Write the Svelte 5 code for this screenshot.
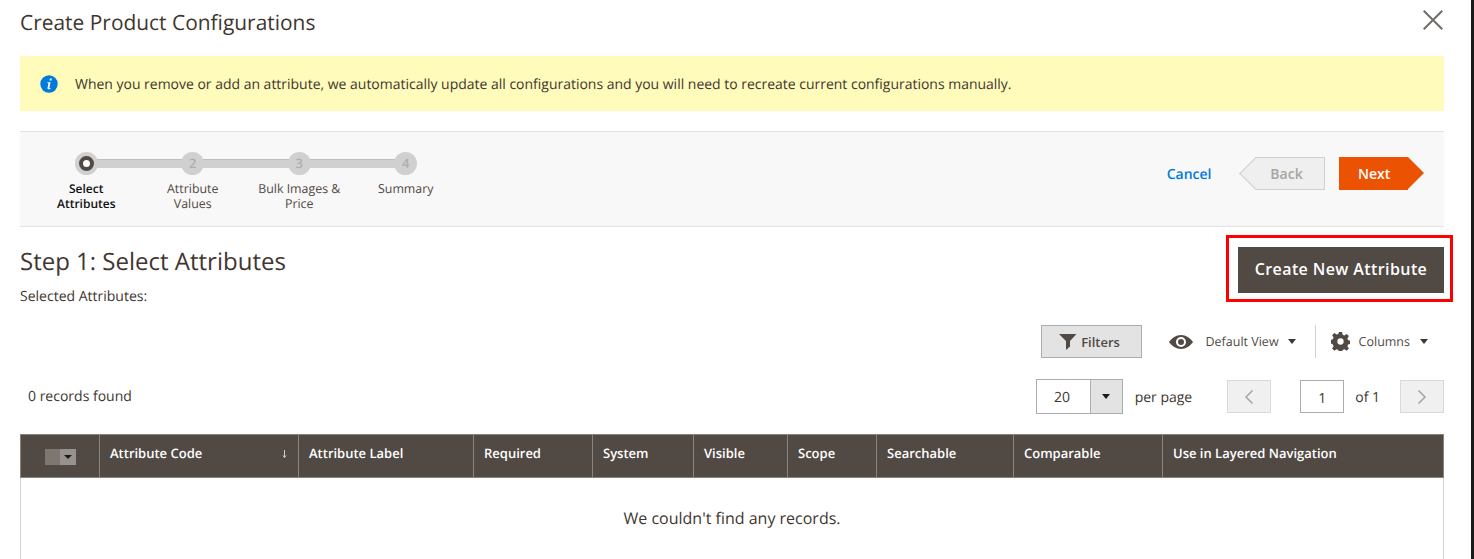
<script>
  const steps = [
    { label: 'Select Attributes', num: '', active: true },
    { label: 'Attribute Values', num: '2' },
    { label: 'Bulk Images & Price', num: '3' },
    { label: 'Summary', num: '4' }
  ];

  // column widths read off the header
  const columns = [
    { label: 'Attribute Code', width: 199, sort: true },
    { label: 'Attribute Label', width: 175 },
    { label: 'Required', width: 119 },
    { label: 'System', width: 101 },
    { label: 'Visible', width: 94 },
    { label: 'Scope', width: 89 },
    { label: 'Searchable', width: 137 },
    { label: 'Comparable', width: 149 },
    { label: 'Use in Layered Navigation', width: 281 }
  ];
</script>

<div class="page">
  <main class="modal">
    <header class="modal-head">
      <h1>Create Product Configurations</h1>
      <button class="close" aria-label="Close">
        <svg width="20" height="20" viewBox="0 0 20 20"><path d="M.7.7 19.300 19.300M19.300.7.7 19.300" fill="none" stroke="#736d68" stroke-width="2"/></svg>
      </button>
    </header>

    <div class="notice">
      <svg class="info" width="18" height="18" viewBox="0 0 18 18">
        <circle cx="9" cy="9" r="8.7" fill="#007bdb"/>
        <path d="M9.9 3.6h2l-.4 2h-2zM7.2 7.3h3.4l-1.3 5.6c-.1.4.3.5 1.2-.1l.2.6c-1.3 1-3.4 1.500-3.200-.3l.9-4.300c.1-.5-.3-.8-1-.9z" fill="#fff"/>
      </svg>
      <span>When you remove or add an attribute, we automatically update all configurations and you will need to recreate current configurations manually.</span>
    </div>

    <section class="wizard">
      <ol class="steps">
        {#each steps as step}
          <li class="step" class:active={step.active}>
            <span class="dot">{step.num}</span>
            <span class="step-label">{step.label}</span>
          </li>
        {/each}
      </ol>
      <div class="wizard-actions">
        <a class="cancel" href="#cancel">Cancel</a>
        <button class="back">Back</button>
        <button class="next">Next</button>
      </div>
    </section>

    <section class="step-head">
      <div>
        <h2>Step 1: Select Attributes</h2>
        <p>Selected Attributes:</p>
      </div>
      <div class="highlight">
        <button class="create">Create New Attribute</button>
      </div>
    </section>

    <div class="toolbar">
      <button class="filters">
        <svg width="18" height="16" viewBox="0 0 18 16"><path d="M0 0h17.500L11 7v5.500L7 16V7z" fill="#514943"/></svg>
        Filters
      </button>
      <div class="view">
        <svg width="24" height="14" viewBox="0 0 24 14">
          <path fill-rule="evenodd" d="M12 0c5 0 9 3 12 7-3 4-7 7-12 7S3 11 0 7c3-4 7-7 12-7zm0 2a5 5 0 1 0 0 10 5 5 0 0 0 0-10z" fill="#514943"/>
          <circle cx="12" cy="7" r="3" fill="#514943"/>
        </svg>
        <span>Default View</span><i class="caret"></i>
      </div>
      <div class="columns-btn">
        <svg width="19" height="19" viewBox="0 0 24 24"><path fill-rule="evenodd" d="M10 0h4l.7 3.400 2.200.9 2.900-1.900 2.800 2.800-1.900 2.900.9 2.200 3.400.7v4l-3.400.7-.9 2.200 1.900 2.900-2.800 2.800-2.900-1.900-2.200.9-.7 3.400h-4l-.7-3.400-2.200-.9-2.900 1.900-2.800-2.800 1.900-2.900-.9-2.200L-1 14v-4l3.400-.7.9-2.200-1.900-2.900 2.800-2.800 2.900 1.900 2.200-.9zM12 8a4 4 0 1 0 0 8 4 4 0 0 0 0-8z" fill="#514943"/></svg>
        <span>Columns</span><i class="caret"></i>
      </div>
    </div>

    <div class="pager-row">
      <span class="records">0 records found</span>
      <div class="pager">
        <div class="per-page">
          <span class="per-value">20</span>
          <span class="per-toggle"><i class="caret dark"></i></span>
        </div>
        <span class="per-label">per page</span>
        <button class="page-btn prev" aria-label="Previous">
          <svg width="10" height="16" viewBox="0 0 10 16"><path d="M8.500 1.500 2 8l6.500 6.500" fill="none" stroke="#a8a39f" stroke-width="1.500"/></svg>
        </button>
        <input class="page-input" value="1" />
        <span class="of">of 1</span>
        <button class="page-btn next-page" aria-label="Next">
          <svg width="10" height="16" viewBox="0 0 10 16"><path d="M1.500 1.500 8 8l-6.500 6.500" fill="none" stroke="#a8a39f" stroke-width="1.500"/></svg>
        </button>
      </div>
    </div>

    <table class="grid">
      <thead>
        <tr>
          <th class="check" style="width: 79px">
            <span class="multi"><span class="box"></span><span class="drop"><i class="caret dark small"></i></span></span>
          </th>
          {#each columns as col}
            <th style="width: {col.width}px">
              {col.label}
              {#if col.sort}
                <svg class="sort" width="5" height="8" viewBox="0 0 5 8"><path d="M2.500 0v7.500M1 5.500l1.500 2 1.500-2" fill="none" stroke="#cfcbc8" stroke-width="1"/></svg>
              {/if}
            </th>
          {/each}
        </tr>
      </thead>
      <tbody>
        <tr>
          <td colspan="10">We couldn't find any records.</td>
        </tr>
      </tbody>
    </table>
  </main>
  <div class="edge"></div>
</div>

<style>
  :global(body) {
    margin: 0;
    background: #fff;
    overflow: hidden;
  }

  .page {
    display: flex;
    justify-content: space-between;
    height: 559px;
    overflow: hidden;
    font-family: 'Open Sans', sans-serif;
    color: #41362f;
    font-size: 14px;
    text-rendering: geometricPrecision;
  }

  .edge {
    width: 3px;
    background: #1a1a1a;
  }

  .modal {
    width: 1424px;
    padding: 0 0 0 20px;
  }

  .modal-head {
    display: flex;
    justify-content: space-between;
    align-items: flex-start;
    height: 56px;
  }

  h1 {
    margin: 0;
    padding-top: 9px;
    font-size: 20.930px;
    line-height: 28px;
    font-weight: 400;
  }

  .close {
    border: 0;
    background: none;
    padding: 0;
    margin: 10px 1px 0 0;
    height: 20px;
  }

  .notice {
    display: flex;
    align-items: center;
    box-sizing: border-box;
    height: 55px;
    padding-left: 20px;
    gap: 17px;
    background: #fffbbb;
    font-size: 13.970px;
  }

  .notice span {
    padding-top: 2px;
  }

  .wizard {
    display: flex;
    justify-content: space-between;
    margin-top: 20px;
    height: 94px;
    background: #f8f8f8;
    border-top: 1px solid #e3e3e3;
    border-bottom: 1px solid #e3e3e3;
  }

  .steps {
    display: flex;
    list-style: none;
    margin: 0;
    padding: 20px 0 0 13px;
  }

  .step {
    position: relative;
    width: 106.500px;
    display: flex;
    flex-direction: column;
    align-items: center;
    font-size: 12.400px;
    line-height: 15px;
    text-align: center;
    color: #514943;
  }

  .step:not(:last-child)::after {
    content: '';
    position: absolute;
    top: 7px;
    left: 50%;
    width: 100%;
    height: 8px;
    background: #d0d0d0;
    border-top: 1px solid #bdbdbd;
  }

  .step.active {
    color: #111;
    font-size: 12px;
    font-weight: 600;
  }

  .dot {
    position: relative;
    z-index: 1;
    box-sizing: border-box;
    width: 23px;
    height: 23px;
    border-radius: 50%;
    background: #d0d0d0;
    color: #b0aeac;
    font-size: 13px;
    font-weight: 600;
    line-height: 23px;
    margin-bottom: 6px;
  }

  .active .dot::after {
    content: '';
    position: absolute;
    box-sizing: border-box;
    left: 4px;
    top: 4px;
    width: 15px;
    height: 15px;
    border-radius: 50%;
    background: #fff;
    border: 4px solid #514943;
  }

  .step-label {
    width: 86px;
  }

  .wizard-actions {
    display: flex;
    align-items: flex-start;
    padding: 25px 20px 0 0;
  }

  .cancel {
    color: #007bdb;
    font-weight: 600;
    font-size: 14px;
    text-decoration: none;
    line-height: 36px;
    margin-right: 27.500px;
  }

  .back,
  .next {
    position: relative;
    height: 33px;
    border: 0;
    font-family: inherit;
    font-size: 14px;
    font-weight: 600;
    padding: 0;
  }

  .back {
    width: 70px;
    margin-left: 16px;
    margin-right: 14px;
    background: #efefef;
    border: 1px solid #d0d0d0;
    border-left: 0;
    color: #a8a5a2;
    text-indent: -6px;
  }

  .back::before {
    content: '';
    position: absolute;
    left: -11px;
    top: 4px;
    width: 22px;
    height: 22px;
    background: #efefef;
    border-left: 1px solid #d0d0d0;
    border-bottom: 1px solid #d0d0d0;
    transform: rotate(45deg);
  }

  .next {
    width: 69px;
    margin-right: 16px;
    background: #eb5202;
    color: #fff;
    text-align: left;
    padding-left: 19px;
  }

  .next::after {
    content: '';
    position: absolute;
    right: -16px;
    top: 0;
    border-left: 16px solid #eb5202;
    border-top: 16.500px solid transparent;
    border-bottom: 16.500px solid transparent;
  }

  .step-head {
    display: flex;
    justify-content: space-between;
    align-items: flex-start;
    height: 98px;
  }

  h2 {
    margin: 18px 0 0;
    font-size: 24px;
    line-height: 33px;
    font-weight: 400;
  }

  .step-head p {
    margin: 9px 0 0;
    font-size: 14px;
    line-height: 19px;
  }

  .highlight {
    margin: 8px -9px 0 0;
    padding: 9px 6px 6px 9px;
    border: 3px solid #f00;
  }

  .create {
    display: block;
    width: 206px;
    height: 46px;
    border: 0;
    background: #514943;
    color: #fff;
    font-family: inherit;
    font-size: 16px;
    font-weight: 600;
    letter-spacing: 0.4px;
    padding: 0 0 2px;
  }

  .toolbar {
    display: flex;
    justify-content: flex-end;
    align-items: center;
    height: 33px;
    padding-right: 16px;
    font-size: 12.500px;
    color: #514943;
  }

  .filters {
    display: flex;
    align-items: center;
    justify-content: center;
    gap: 4px;
    width: 101px;
    height: 33px;
    margin-right: 27px;
    background: #e3e3e3;
    border: 1px solid #adadad;
    color: #514943;
    font-family: inherit;
    font-size: 13px;
    font-weight: 600;
    padding: 0 3px 0 0;
  }

  .view {
    display: flex;
    align-items: center;
    height: 33px;
    padding-right: 19px;
    border-right: 1px solid #d0d0d0;
  }

  .view svg {
    margin-right: 13px;
  }

  .columns-btn {
    display: flex;
    align-items: center;
    padding-left: 15px;
  }

  .columns-btn svg {
    margin-right: 9px;
  }

  .caret {
    display: inline-block;
    width: 0;
    height: 0;
    margin-left: 9px;
    border-top: 5px solid #41362f;
    border-left: 4.500px solid transparent;
    border-right: 4.500px solid transparent;
  }

  .columns-btn .caret {
    margin-left: 10px;
  }

  .caret.dark {
    margin: 0;
    border-top-color: #1a1a1a;
  }

  .caret.small {
    border-top-width: 4px;
    border-left-width: 4px;
    border-right-width: 4px;
  }

  .pager-row {
    display: flex;
    justify-content: space-between;
    align-items: center;
    height: 35px;
    margin-top: 21px;
  }

  .records {
    padding-left: 8px;
  }

  .pager {
    display: flex;
    align-items: center;
  }

  .per-page {
    display: flex;
    box-sizing: border-box;
    width: 87px;
    height: 35px;
    border: 1px solid #adadad;
  }

  .per-value {
    box-sizing: border-box;
    width: 53px;
    padding-right: 2px;
    text-align: center;
    line-height: 35px;
  }

  .per-toggle {
    flex: 1;
    display: flex;
    align-items: center;
    justify-content: center;
    background: #e3e3e3;
    border-left: 1px solid #adadad;
  }

  .per-label {
    margin: 0 35px 0 12px;
    padding-top: 2px;
  }

  .page-btn {
    display: flex;
    align-items: center;
    justify-content: center;
    box-sizing: border-box;
    width: 44px;
    height: 33px;
    background: #f0f0f0;
    border: 1px solid #d9d9d9;
    padding: 0;
  }

  .page-input {
    box-sizing: border-box;
    width: 44px;
    height: 33px;
    margin-left: 29px;
    border: 1px solid #adadad;
    text-align: center;
    font-family: inherit;
    font-size: 14px;
    color: #41362f;
    padding: 2px 0 0;
  }

  .of {
    margin: 0 20px 0 11px;
    padding-top: 2px;
  }

  .grid {
    margin-top: 20px;
    width: 1424px;
    table-layout: fixed;
    border-collapse: collapse;
    font-size: 13px;
  }

  .grid th {
    position: relative;
    box-sizing: border-box;
    height: 43px;
    padding: 0 10px 7px;
    background: #514943;
    color: #fff;
    font-weight: 600;
    text-align: left;
    border: 1px solid #8a837e;
  }

  .grid th.check {
    padding: 0;
    text-align: center;
  }

  .multi {
    display: inline-flex;
    vertical-align: middle;
    height: 16px;
  }

  .box {
    width: 15px;
    background: #7d7770;
  }

  .drop {
    display: flex;
    align-items: center;
    justify-content: center;
    width: 16px;
    background: #97928e;
  }

  .sort {
    position: absolute;
    right: 11px;
    top: 15px;
  }

  .grid td {
    height: 79px;
    padding: 0 0 6px;
    border: 1px solid #d6d6d6;
    text-align: center;
    font-size: 16px;
    vertical-align: top;
    line-height: 81px;
  }
</style>
